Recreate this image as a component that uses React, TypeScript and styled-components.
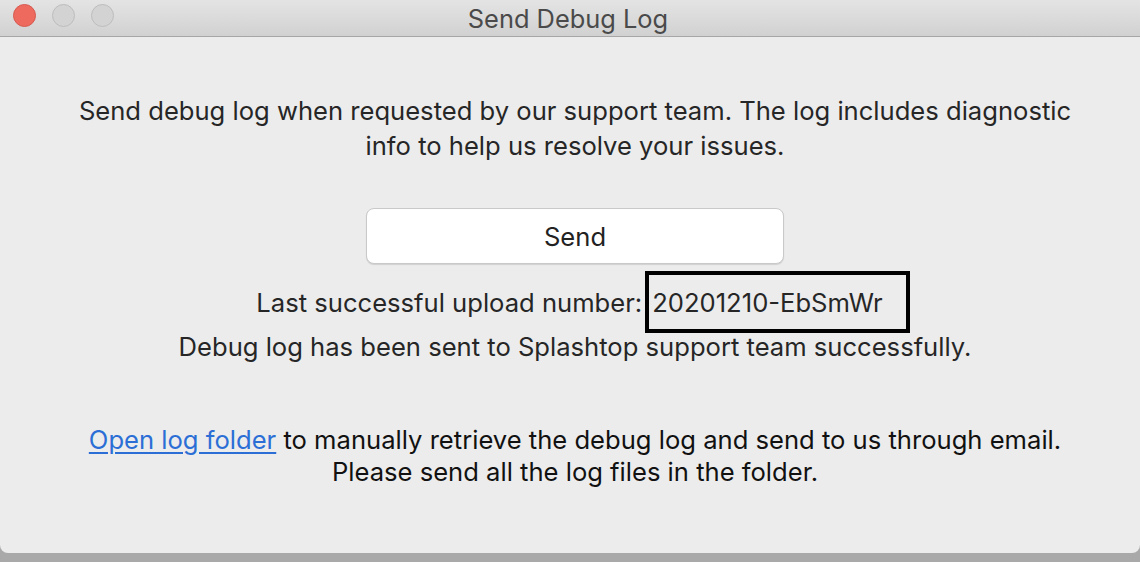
import React from 'react'
import styled, { createGlobalStyle } from 'styled-components'

const GlobalStyle = createGlobalStyle`
  html, body {
    margin: 0;
    padding: 0;
    background: #a9a9a9;
    font-family: Inter, 'Liberation Sans', Arial, sans-serif;
  }
`

const Window = styled.div`
  width: 1140px;
  height: 553px;
  background: #ececec;
  border-radius: 0 0 8px 8px;
  display: flex;
  flex-direction: column;
  overflow: hidden;
`

const TitleBar = styled.div`
  position: relative;
  height: 36px;
  flex: none;
  background: linear-gradient(#e4e4e4, #d1d1d1);
  border-bottom: 1px solid #a6a6a6;
  display: flex;
  align-items: center;
  justify-content: center;
`

const Lights = styled.div`
  position: absolute;
  left: 13px;
  top: 4px;
  display: flex;
  gap: 16px;
`

const Light = styled.span<{ $red?: boolean }>`
  width: 23px;
  height: 23px;
  border-radius: 50%;
  box-sizing: border-box;
  background: ${({ $red }) => ($red ? '#ee6a5f' : '#d3d3d3')};
  border: 1px solid ${({ $red }) => ($red ? '#d55a4f' : '#bdbdbd')};
`

const Title = styled.div`
  font-size: 25.4px;
  color: #4a4a4a;
  margin-left: -4px;
`

const Body = styled.div`
  flex: 1;
  display: flex;
  flex-direction: column;
  align-items: center;
  padding: 56px 0 0 10px;
  color: #262626;
`

const Para = styled.p<{ $dark?: boolean; $lh?: number }>`
  margin: 0;
  font-size: 25.6px;
  line-height: ${({ $lh }) => $lh ?? 35}px;
  text-align: center;
  white-space: nowrap;
  color: ${({ $dark }) => ($dark ? '#111' : '#262626')};
`

const SendButton = styled.button`
  margin-top: 45px;
  width: 418px;
  height: 56px;
  background: #fff;
  border: 1px solid #c9c9c9;
  border-radius: 8px;
  box-shadow: 0 1px 1px rgba(0, 0, 0, 0.12);
  font-family: inherit;
  font-size: 25.6px;
  color: #222;
  padding: 0;
`

const UploadRow = styled.div`
  margin-top: 7px;
  display: flex;
  align-items: center;
  font-size: 25.6px;
  color: #262626;
  margin-left: 16px;
  white-space: nowrap;
`

const Highlight = styled.span`
  display: inline-flex;
  align-items: center;
  height: 62px;
  box-sizing: border-box;
  border: 4px solid #000;
  padding: 0 23px 0 3px;
  margin-left: 3px;
`

const Status = styled(Para)`
  margin-top: -4px;
`

const Footer = styled.div`
  margin-top: 60px;
  display: flex;
  flex-direction: column;
  align-items: center;
`

const Link = styled.a`
  color: #2b6fd6;
  text-decoration: underline;
  text-underline-offset: 3px;
  cursor: pointer;
`

export default function App() {
  return (
    <>
      <GlobalStyle />
      <Window>
        <TitleBar>
          <Lights>
            <Light $red />
            <Light />
            <Light />
          </Lights>
          <Title>Send Debug Log</Title>
        </TitleBar>
        <Body>
          <Para>
            Send debug log when requested by our support team. The log includes diagnostic
            <br />
            info to help us resolve your issues.
          </Para>
          <SendButton>Send</SendButton>
          <UploadRow>
            Last successful upload number:
            <Highlight>20201210-EbSmWr</Highlight>
          </UploadRow>
          <Status>Debug log has been sent to Splashtop support team successfully.</Status>
          <Footer>
            <Para $dark $lh={32}>
              <Link>Open log folder</Link> to manually retrieve the debug log and send to us through email.
              <br />
              Please send all the log files in the folder.
            </Para>
          </Footer>
        </Body>
      </Window>
    </>
  )
}
